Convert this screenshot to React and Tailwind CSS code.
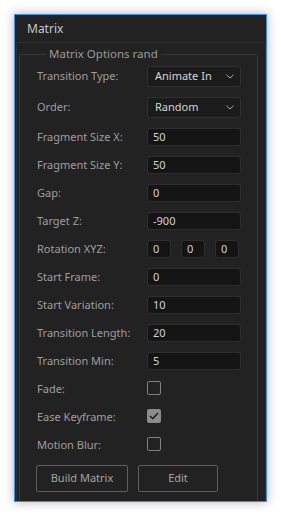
import React from "react";

const font = { fontFamily: '"Noto Sans", "Open Sans", sans-serif' };

// Dropdown row
const SelectRow = ({ label, value }) => (
  <div className="flex items-center h-[31px]">
    <span className="w-[110px] text-[11px] text-[#9e9e9e]">{label}</span>
    <div className="flex items-center justify-between w-[94px] h-[21px] pl-[7px] pr-[6px] bg-[#1b1b1b] border border-[#303030] rounded-[3px] text-[11px] text-[#d4d4d4]">
      <span>{value}</span>
      <svg width="8" height="5" viewBox="0 0 8 5" fill="none">
        <path d="M0.5 0.8 L4 4 L7.5 0.8" stroke="#a8a8a8" strokeWidth="1" />
      </svg>
    </div>
  </div>
);

// Text field row
const InputRow = ({ label, value }) => (
  <div className="flex items-center h-[28px]">
    <span className="w-[110px] text-[11px] text-[#9e9e9e]">{label}</span>
    <div className="flex items-center w-[94px] h-[18px] px-[5px] bg-[#141414] border border-[#2e2e2e] rounded-[3px] text-[11px] text-[#d2d2d2]">
      {value}
    </div>
  </div>
);

const SmallInput = ({ value }) => (
  <div className="flex items-center w-[24px] h-[18px] px-[5px] bg-[#141414] border border-[#2e2e2e] rounded-[3px] text-[11px] text-[#d2d2d2]">
    {value}
  </div>
);

const CheckRow = ({ label, checked }) => (
  <div className="flex items-center h-[28px]">
    <span className="w-[110px] text-[11px] text-[#9e9e9e]">{label}</span>
    {checked ? (
      <div className="flex items-center justify-center w-[14px] h-[14px] -mt-[3px] rounded-[2px] bg-[#8c8c8c]">
        <svg width="10" height="8" viewBox="0 0 10 8" fill="none">
          <path d="M1 4 L3.8 6.6 L9 1" stroke="#222" strokeWidth="1.6" />
        </svg>
      </div>
    ) : (
      <div className="w-[14px] h-[14px] -mt-[3px] rounded-[2px] border-[1.5px] border-[#808080]" />
    )}
  </div>
);

export default function App() {
  return (
    <div className="w-[281px] h-[516px] bg-white pt-[14px] pl-[14px]" style={font}>
      <div className="flex flex-col w-[253px] h-[488px] border border-[#2f8ff0] bg-[#222222] shadow-[0_0_10px_rgba(0,0,0,0.3)] overflow-hidden">
        {/* Title */}
        <div className="shrink-0 h-[27px] pl-[12px] flex items-center text-[12px] text-[#c2c8d0]">Matrix</div>

        {/* Panel */}
        <div className="flex-1 min-h-0 ml-[1px] border border-b-0 border-[#2f2f2f] rounded-t-[3px] pl-[2px] pr-[7px]">
          <fieldset className="h-[470px] mt-[4px] border border-[#383838] rounded-[3px] pl-[17px] pr-[15px]">
            <legend className="ml-[9px] px-[3px] leading-[14px] text-[11.5px] text-[#9a9a9a]">Matrix Options rand</legend>

            <SelectRow label="Transition Type:" value="Animate In" />
            <SelectRow label="Order:" value="Random" />
            <InputRow label="Fragment Size X:" value="50" />
            <InputRow label="Fragment Size Y:" value="50" />
            <InputRow label="Gap:" value="0" />
            <InputRow label="Target Z:" value="-900" />
            <div className="flex items-center h-[28px]">
              <span className="w-[110px] text-[11px] text-[#9e9e9e]">Rotation XYZ:</span>
              <div className="flex gap-[10px]">
                <SmallInput value="0" />
                <SmallInput value="0" />
                <SmallInput value="0" />
              </div>
            </div>
            <InputRow label="Start Frame:" value="0" />
            <InputRow label="Start Variation:" value="10" />
            <InputRow label="Transition Length:" value="20" />
            <InputRow label="Transition Min:" value="5" />
            <CheckRow label="Fade:" />
            <CheckRow label="Ease Keyframe:" checked />
            <CheckRow label="Motion Blur:" />

            <div className="flex gap-[10px] mt-[6px] -ml-[1px]">
              <button className="w-[92px] h-[27px] border border-[#5e5e5e] rounded-[2px] text-[11px] text-[#a4a4a4]">Build Matrix</button>
              <button className="w-[80px] h-[27px] border border-[#5e5e5e] rounded-[2px] text-[11px] text-[#a4a4a4]">Edit</button>
            </div>
          </fieldset>
        </div>
      </div>
    </div>
  );
}
